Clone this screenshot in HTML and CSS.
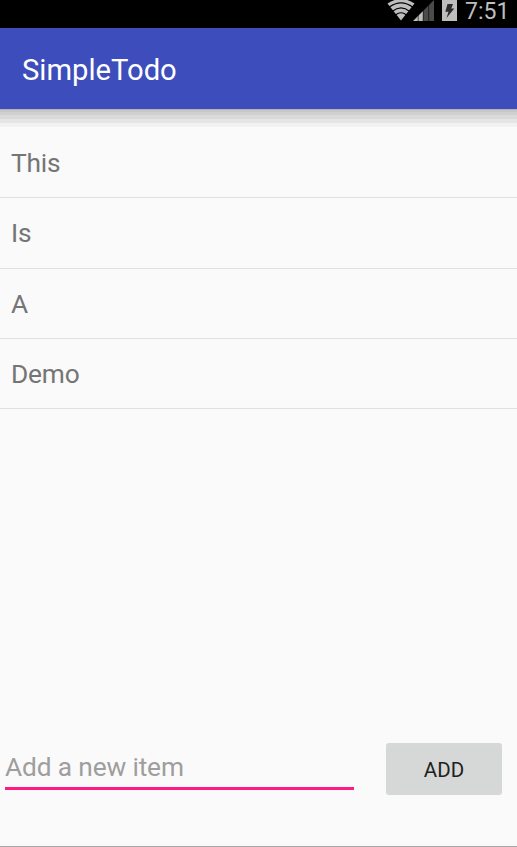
FILE: index.html
```
<!DOCTYPE html>
<html lang="en">
<head>
<meta charset="utf-8">
<title>SimpleTodo</title>
<link rel="stylesheet" href="styles.css">
</head>
<body>
<div class="screen">
  <div class="status">
    <svg class="wifi" viewBox="0 0 28 21">
      <path d="M0.500 3.500Q14-5.500 27.500 3.500L14 20.500Z" fill="#bebebe"/>
      <path d="M2 7.300Q14-1.700 26 7.300M5.500 11.300Q14 4.300 22.500 11.300M8.500 15Q14 10.500 19.500 15" fill="none" stroke="#000" stroke-width="1.200"/>
    </svg>
    <svg class="signal" viewBox="0 0 21 21">
      <path d="M0 21L10 11V21Z" fill="#bebebe"/>
      <path d="M10 11L21 0V21H10Z" fill="#4b4b4b"/>
      <path d="M5.200 14V21M10.200 9V21M15.700 4V21" stroke="#000" stroke-opacity=".6" stroke-width="1"/>
    </svg>
    <svg class="battery" viewBox="0 0 15 21">
      <path d="M0 0H15V21H0Z" fill="#bebebe"/>
      <path d="M5.500 4H11L9.300 8.500H12.300L4.500 18L6.500 11.800H3.300Z" fill="#2c2c2c"/>
    </svg>
    <span class="clock">7:51</span>
  </div>
  <header class="toolbar"><h1>SimpleTodo</h1></header>
  <div class="shade"></div>
  <ul class="list">
    <li>This</li>
    <li>Is</li>
    <li>A</li>
    <li>Demo</li>
  </ul>
  <form class="entry">
    <input type="text" placeholder="Add a new item">
    <button type="button">ADD</button>
  </form>
</div>
</body>
</html>
```
FILE: styles.css
```
* { box-sizing: border-box; }
body {
  margin: 0;
  background: #fafafa;
  font-family: Roboto, sans-serif;
}
.screen {
  display: flex;
  flex-direction: column;
  height: 847px;
  overflow: hidden;
  border-bottom: 1px solid #a8a8a8;
}
.status {
  display: flex;
  flex: none;
  height: 28px;
  padding-right: 7px;
  justify-content: flex-end;
  background: #000;
}
.status svg { display: block; height: 21px; }
.wifi { width: 28px; margin-right: -2px; }
.signal { width: 21px; margin-right: 8px; }
.battery { width: 15px; margin-right: 8px; }
.clock {
  width: 45px;
  color: #bebebe;
  font-size: 23px;
  line-height: 23px;
  white-space: nowrap;
}
.toolbar {
  display: flex;
  flex: none;
  align-items: center;
  height: 81px;
  padding: 2px 22px 0;
  background: #3d4dbc;
}
.toolbar h1 {
  margin: 0;
  color: #fff;
  font-size: 29.2px;
  font-weight: 400;
}
.shade {
  flex: none;
  height: 18px;
  background: linear-gradient(#b4b4b4 0 1px, #c8c8c8 1px 3px, #d0d0d0 3px 6px, #dadada 6px 10px, #e5e5e5 10px 14px, #f2f2f2 14px 18px);
}
.list {
  margin: 0;
  padding: 1px 0 0;
  list-style: none;
}
.list li {
  display: flex;
  align-items: center;
  height: 70.25px;
  padding: 1px 11px 0;
  border-bottom: 1px solid #e0e0e0;
  color: #757575;
  font-size: 26.3px;
  letter-spacing: -0.2px;
}
.entry {
  display: flex;
  align-items: flex-start;
  justify-content: space-between;
  margin-top: auto;
  padding: 0 15px 51px 5px;
}
.entry input {
  width: 349px;
  height: 47px;
  padding: 4px 0 0;
  border: 0;
  border-bottom: 3px solid #ff1b83;
  border-radius: 0;
  outline: 0;
  background: none;
  font: 26.3px Roboto, sans-serif;
  letter-spacing: -0.15px;
}
.entry input::placeholder { color: #9e9e9e; opacity: 1; }
.entry button {
  width: 116px;
  height: 52px;
  padding: 1px 0 0;
  border: 0;
  border-radius: 3px;
  background: #d6d7d7;
  color: #212121;
  font: 20.5px Roboto, sans-serif;
}
```
